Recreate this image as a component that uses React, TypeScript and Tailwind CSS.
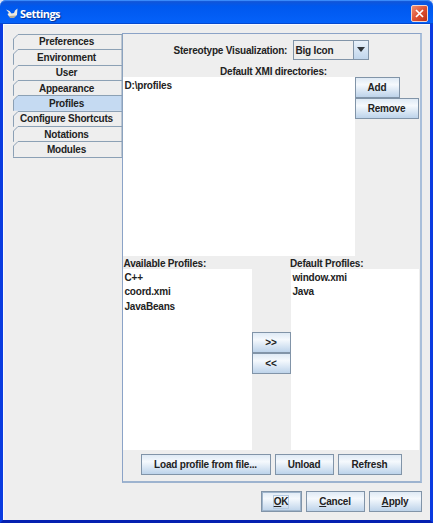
import type { ReactNode } from "react";

function Button({ className, children }: { className: string; children: ReactNode }) {
  return (
    <button
      className={`flex shrink-0 items-center justify-center whitespace-nowrap border border-[#8194a8] bg-linear-to-b from-[#dfeaf5] via-[#f5f9fd] via-35% to-[#bdd3ea] p-0 pr-px font-bold tracking-[-0.2px] ${className}`}
    >
      {children}
    </button>
  );
}

const tabs = [
  "Preferences",
  "Environment",
  "User",
  "Appearance",
  "Profiles",
  "Configure Shortcuts",
  "Notations",
  "Modules",
];

function Tab({ name }: { name: string }) {
  const selected = name === "Profiles";
  return (
    <div className="relative flex h-[15.35px] items-center justify-center">
      <svg className="absolute inset-0 h-full w-full overflow-visible" viewBox="0 0 109 15.35" preserveAspectRatio="none">
        <path
          d="M0.5 15.8V5L5 0.5H109V15.8"
          fill={selected ? "#c5daf2" : "#eeeeee"}
          stroke="#8ba0b5"
          strokeWidth="1"
        />
      </svg>
      <span className="relative whitespace-nowrap pr-[2px] pt-[0.6px]">{name}</span>
    </div>
  );
}

function List({ items, className }: { items: string[]; className: string }) {
  return (
    <ul className={`bg-white pl-[1.5px] pt-[1.5px] leading-[14.6px] ${className}`}>
      {items.map((item) => (
        <li key={item}>{item}</li>
      ))}
    </ul>
  );
}

export default function App() {
  return (
    <div className="flex h-[523px] w-[433px] flex-col overflow-hidden bg-[#dfe4f5] font-['Liberation_Sans',Arial,sans-serif] text-[10px] font-bold leading-[13px] tracking-[-0.2px] text-[#222222]">
      <header className="flex h-[24px] shrink-0 items-center rounded-t-[6px] bg-linear-to-b from-[#1454d0] via-[#0058ee] via-25% to-[#0562fa] pl-[6px] pr-[5px] shadow-[inset_0_2px_1px_-1px_#3f91ff,inset_0_-1px_0_#0449cf]">
        <svg className="mt-[3px]" width="12" height="11" viewBox="0 0 12 11">
          <path d="M0 1.5L3.5 3L5.5 5.5L8 5L9 2.5L11.5 0.5L11 7L8 9.5L3 8.5L1.5 6L3 5Z" fill="#eee9df" />
          <path d="M3 8L10 7.5L8 10H4Z" fill="#b5ac9c" />
        </svg>
        <span className="ml-[2px] mt-[3px] font-['Open_Sans','Noto_Sans',sans-serif] text-[11px] leading-[14px] tracking-[-0.55px] text-white [text-shadow:1px_1px_1px_#08308c]">
          Settings
        </span>
        <button className="ml-auto mt-[2px] flex h-[17px] w-[17px] items-center justify-center rounded-[2px] border border-[#f3d4cc] bg-linear-to-br from-[#ee8d70] via-[#df5133] to-[#bd3014]">
          <svg width="9" height="9" viewBox="0 0 9 9">
            <path d="M1 1L8 8M8 1L1 8" stroke="white" strokeWidth="1.7" />
          </svg>
        </button>
      </header>

      <main className="flex min-h-0 flex-1 flex-col border-x-[3px] border-b-[3px] border-x-[#0a3be0] border-b-[#0520b0] bg-[#eeeeee] shadow-[inset_1px_1px_0_#f8faff]">
        <div className="flex h-[459px] shrink-0 pl-[10px] pt-[9px]">
          <nav className="h-[125px] w-[109px] shrink-0 border-b border-[#8ba0b5] pt-[1px]">
            {tabs.map((name) => (
              <Tab key={name} name={name} />
            ))}
          </nav>
          <section className="flex h-[450px] w-[300px] flex-col border border-r-2 border-b-2 border-[#8ba3c7] border-r-[#a9bfda] border-b-[#9db3cf]">
            <div className="flex h-[31px] shrink-0 items-center pl-[50px]">
              <span className="w-[120px] whitespace-nowrap pl-[0.5px] pt-px">Stereotype Visualization:</span>
              <div className="flex h-[20px] w-[76px] border border-[#8194a8]">
                <span className="flex flex-1 items-center pl-[1.5px] pt-px">Big Icon</span>
                <span className="flex w-[15px] items-center justify-center border-l border-[#8194a8] bg-linear-to-b from-[#e8f1fa] to-[#c1d6ec]">
                  <svg width="8" height="5" viewBox="0 0 8 5">
                    <path d="M0 0H8L4 5Z" fill="#30353a" />
                  </svg>
                </span>
              </div>
            </div>
            <div className="h-[12px] shrink-0 pl-[97px]">Default XMI directories:</div>
            <div className="flex h-[179px] shrink-0">
              <List items={["D:\\profiles"]} className="w-[232px]" />
              <div className="flex flex-col">
                <Button className="h-[21px] w-[45px]">Add</Button>
                <Button className="h-[21px] w-[64px]">Remove</Button>
              </div>
            </div>
            <div className="flex h-[13px] shrink-0 items-center pt-px">
              <span className="w-[167px] pl-[0.5px]">Available Profiles:</span>
              <span>Default Profiles:</span>
            </div>
            <div className="flex h-[181px] shrink-0 pr-[1px]">
              <List items={["C++", "coord.xmi", "JavaBeans"]} className="w-[129px]" />
              <div className="flex w-[39px] flex-col pt-[63px]">
                <Button className="h-[21px] w-[39px]">&gt;&gt;</Button>
                <Button className="h-[21px] w-[39px]">&lt;&lt;</Button>
              </div>
              <List items={["window.xmi", "Java"]} className="flex-1" />
            </div>
            <div className="flex gap-[4px] pl-[18px] pt-[4px]">
              <Button className="h-[21px] w-[130px]">Load profile from file...</Button>
              <Button className="h-[21px] w-[59px]">Unload</Button>
              <Button className="h-[21px] w-[64px]">Refresh</Button>
            </div>
          </section>
        </div>
        <footer className="flex justify-end gap-[4px] pr-[8px] pt-[8px]">
          <Button className="h-[21px] w-[41px] outline outline-1 -outline-offset-2 outline-[#9fb5cc]">
            <span className="border border-[#b5cbe2] leading-[12px]"><u>O</u>K</span>
          </Button>
          <Button className="h-[21px] w-[59px]"><span><u>C</u>ancel</span></Button>
          <Button className="h-[21px] w-[53px]"><span><u>A</u>pply</span></Button>
        </footer>
      </main>
    </div>
  );
}
